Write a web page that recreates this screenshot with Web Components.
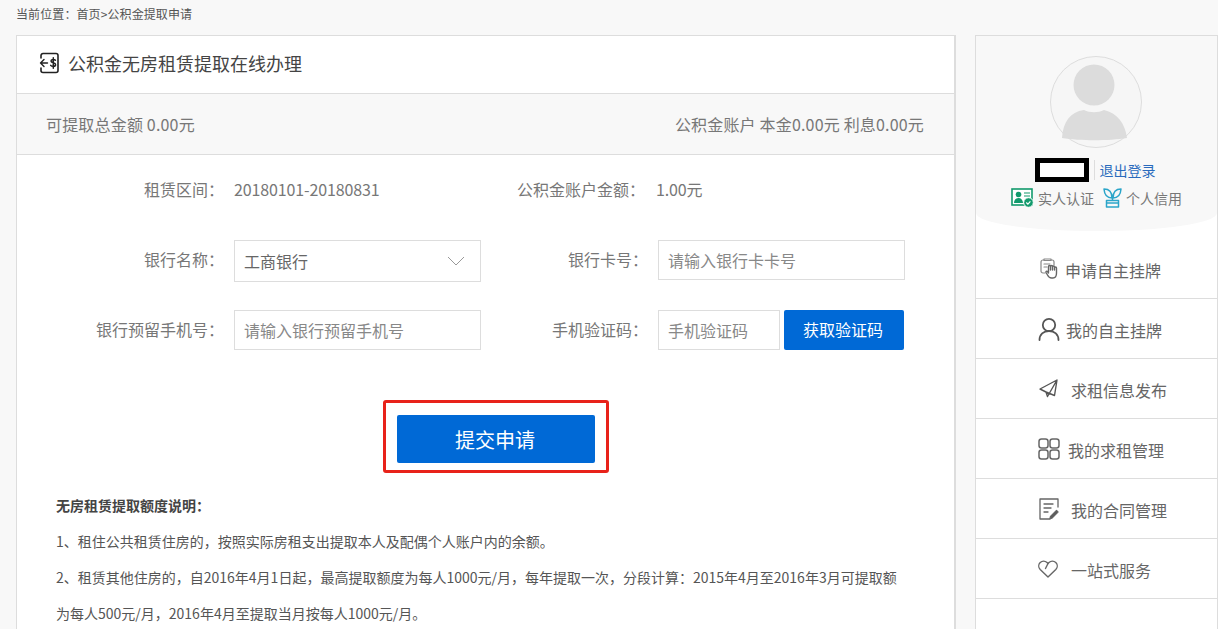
<!DOCTYPE html>
<html lang="zh">
<head>
<meta charset="utf-8">
<title>公积金无房租赁提取在线办理</title>
<style>
  html, body { margin: 0; height: 629px; overflow: hidden; background: #f8f8f8; }
  body { font-family: "Noto Sans CJK SC", "Noto Sans", sans-serif; color: #666; }
  .page { display: flex; align-items: flex-start; padding-left: 16px; }
</style>
</head>
<body>
<page-crumb>当前位置：首页&gt;公积金提取申请</page-crumb>
<div class="page">
  <apply-card>
    <svg slot="icon" width="20" height="22" viewBox="0 0 20 22" fill="none" stroke="#222" stroke-width="1.600" stroke-linecap="round" stroke-linejoin="round">
      <path d="M2 6V3.500A2 2 0 0 1 4 1.500h13a2 2 0 0 1 2 2v15a2 2 0 0 1-2 2H4a2 2 0 0 1-2-2V16"/>
      <path d="M8.500 11H1.500M5 7.500 1.500 11 5 14.500" stroke-width="1.400"/>
      <path d="M16.400 8.200c-.8-1-4.400-1.200-4.400.8 0 2.200 4.600 1.400 4.600 3.700 0 2.100-4 1.900-4.900.7M14.300 5.800v10.400" stroke-width="1.500"/>
    </svg>
    <span slot="title">公积金无房租赁提取在线办理</span>
    <span slot="left">可提取总金额 0.00元</span>
    <span slot="right">公积金账户 本金0.00元 利息0.00元</span>
    <apply-form slot="form"></apply-form>
    <apply-notes slot="notes">
      <b>无房租赁提取额度说明：</b>
      <p>1、租住公共租赁住房的，按照实际房租支出提取本人及配偶个人账户内的余额。</p>
      <p>2、租赁其他住房的，自2016年4月1日起，最高提取额度为每人1000元/月，每年提取一次，分段计算：2015年4月至2016年3月可提取额<br>为每人500元/月，2016年4月至提取当月按每人1000元/月。</p>
    </apply-notes>
  </apply-card>
  <side-panel>
    <side-item pad="64" gap="6">
      <svg slot="icon" width="19" height="21" viewBox="0 0 19 21" fill="none" stroke="#888" stroke-width="1.200" stroke-linecap="round" stroke-linejoin="round">
        <path d="M5 15H3a2 2 0 0 1-2-2V4a2 2 0 0 1 2-2h1M4 2.500h7V1H4zM11 2h1a2 2 0 0 1 2 2v3"/>
        <path d="M4 6h6M4 9h3"/>
        <path stroke="#666" stroke-width="1.400" fill="#fff" d="M8.500 14V8.500a1 1 0 0 1 2 0V12m0-3.500a1 1 0 0 1 2 0V12m0-3a1 1 0 0 1 2 0v3m0-2a1 1 0 0 1 2 0V15c0 3-1.500 5-3.500 5h-1.500c-2 0-3-1-4-3l-1.500-2.500c-.5-1 .8-1.800 1.500-1L8.500 15"/>
      </svg>
      申请自主挂牌
    </side-item>
    <side-item pad="62" gap="6">
      <svg slot="icon" width="22" height="24" viewBox="0 0 22 24" fill="none" stroke="#555" stroke-width="1.800" stroke-linecap="round">
        <circle cx="11" cy="8" r="6.200"/>
        <path d="M1.500 23c0-5.500 4-9 9.500-9s9.500 3.500 9.500 9"/>
      </svg>
      我的自主挂牌
    </side-item>
    <side-item pad="63" gap="13">
      <svg slot="icon" width="19" height="19" viewBox="0 0 19 19" fill="none" stroke="#555" stroke-width="1.400" stroke-linejoin="round" stroke-linecap="round">
        <path d="M18 1 1 10l6 3 1.500 4.500L18 1 15.500 16.500 7 13"/>
      </svg>
      求租信息发布
    </side-item>
    <side-item pad="62" gap="8">
      <svg slot="icon" width="22" height="22" viewBox="0 0 22 22" fill="none" stroke="#666" stroke-width="1.500">
        <rect x="1" y="1" width="9" height="9" rx="2.500"/>
        <rect x="12" y="1" width="9" height="9" rx="2.500"/>
        <rect x="1" y="12" width="9" height="9" rx="2.500"/>
        <rect x="12" y="12" width="9" height="9" rx="2.500"/>
      </svg>
      我的求租管理
    </side-item>
    <side-item pad="63" gap="12">
      <svg slot="icon" width="20" height="22" viewBox="0 0 20 22" fill="none" stroke="#666" stroke-width="1.300" stroke-linecap="round" stroke-linejoin="round">
        <path d="M19 9V1H1v20h10"/>
        <path d="M5 6h9M5 10h7M5 14h4"/>
        <path d="M13 20l6-6-1.500-1.500-6 6-.5 2z" fill="#555"/>
      </svg>
      我的合同管理
    </side-item>
    <side-item pad="62" gap="13">
      <svg slot="icon" width="20" height="18" viewBox="0 0 20 18" fill="none" stroke="#666" stroke-width="1.400" stroke-linejoin="round" stroke-linecap="round">
        <path d="M10 17 2.200 9.500a5 5 0 0 1 0-7 5 5 0 0 1 6.800 0L10 3.500l1-1a5 5 0 0 1 6.800 0 5 5 0 0 1 0 7z"/>
        <path d="M10 3.500 7.500 8.500"/>
      </svg>
      一站式服务
    </side-item>
    <side-item></side-item>
  </side-panel>
</div>

<script>
  const FONT = '"Noto Sans CJK SC", "Noto Sans", sans-serif';

  class PageCrumb extends HTMLElement {
    constructor() {
      super();
      this.attachShadow({ mode: "open" }).innerHTML = `
        <style>
          :host { display: block; height: 35px; padding: 5px 0 0 16px; box-sizing: border-box;
            font: 12px/18px ${FONT}; letter-spacing: .1px; color: #555; }
        </style>
        <slot></slot>`;
    }
  }

  class ApplyCard extends HTMLElement {
    constructor() {
      super();
      this.attachShadow({ mode: "open" }).innerHTML = `
        <style>
          :host { display: block; width: 940px; height: 594px; box-sizing: border-box; background: #fff; overflow: hidden;
            border: 1px solid #ddd; border-right: 2px solid #ddd; border-bottom: 0; flex: none; }
          .head { display: flex; align-items: center; gap: 9px; height: 58px; padding: 0 0 3px 22px; box-sizing: border-box;
            font-size: 18px; color: #444; border-bottom: 1px solid #ddd; }
          .bar { display: flex; justify-content: space-between; align-items: center; height: 61px; padding: 0 30px 0 29px;
            background: #f8f8f8; border-bottom: 1px solid #ddd; font-size: 16px; letter-spacing: .18px; color: #777; box-sizing: border-box; }
          ::slotted(svg) { display: block; }
        </style>
        <div class="head"><slot name="icon"></slot><slot name="title"></slot></div>
        <div class="bar"><slot name="left"></slot><slot name="right"></slot></div>
        <slot name="form"></slot>
        <slot name="notes"></slot>`;
    }
  }

  class FormLabel extends HTMLElement {
    constructor() {
      super();
      this.attachShadow({ mode: "open" }).innerHTML = `
        <style>
          :host { display: flex; align-items: center; justify-content: flex-end; padding: 0 10px 2px 0;
            font-size: 16px; color: #777; white-space: nowrap; }
        </style>
        <slot></slot>：`;
    }
  }

  class FormInput extends HTMLElement {
    constructor() {
      super();
      this.attachShadow({ mode: "open" }).innerHTML = `
        <style>
          :host { display: flex; align-items: center; justify-content: space-between; box-sizing: border-box; height: 40px;
            padding: 0 10px 0 9px; background: #fff; border: 1px solid #ddd; font-size: 16px; color: #888; }
          :host([select]) { height: 42px; color: #666; padding: 0 15px 1px 9px; }
          svg { display: none; }
          :host([select]) svg { display: block; }
        </style>
        <slot></slot>
        <svg width="18" height="10" viewBox="0 0 18 10" fill="none" stroke="#999" stroke-width="1"><path d="M1 1l8 8 8-8"/></svg>`;
    }
  }

  class ApplyForm extends HTMLElement {
    constructor() {
      super();
      this.attachShadow({ mode: "open" }).innerHTML = `
        <style>
          :host { display: block; padding-top: 15px; }
          .grid { display: grid; grid-template-columns: 217px 247px 177px 247px; grid-auto-rows: 40px; row-gap: 30px; }
          .value { display: flex; align-items: center; padding-bottom: 2px; font-size: 16px; letter-spacing: -.12px; color: #777; }
          .value.amount { margin-left: -2px; }
          .narrow { padding-right: 13px; }
          .code { display: flex; gap: 4px; }
          .code form-input { width: 122px; flex: none; }
          .send { width: 120px; height: 40px; border: 0; border-radius: 2px; background: #0069d6; color: #fff;
            font: 16px ${FONT}; padding: 0 2px 2px 0; }
          .frame { width: 198px; height: 48px; margin: 50px 0 0 366px; padding: 12px 11px 7px;
            border: 3px solid #e8221a; border-radius: 3px; }
          .submit { display: block; width: 198px; height: 48px; border: 0; border-radius: 2px; background: #0069d6; color: #fff;
            font: 20px ${FONT}; padding: 0 2px 0 0; }
        </style>
        <div class="grid">
          <form-label>租赁区间</form-label><div class="value">20180101-20180831</div>
          <form-label class="narrow">公积金账户金额</form-label><div class="value amount">1.00元</div>
          <form-label>银行名称</form-label><form-input select>工商银行</form-input>
          <form-label>银行卡号</form-label><form-input>请输入银行卡卡号</form-input>
          <form-label>银行预留手机号</form-label><form-input>请输入银行预留手机号</form-input>
          <form-label>手机验证码</form-label>
          <div class="code"><form-input>手机验证码</form-input><button class="send" type="button">获取验证码</button></div>
        </div>
        <div class="frame"><button class="submit" type="button">提交申请</button></div>`;
    }
  }

  class ApplyNotes extends HTMLElement {
    constructor() {
      super();
      this.attachShadow({ mode: "open" }).innerHTML = `
        <style>
          :host { display: block; margin-top: 14px; padding-left: 39px; font-size: 14px; line-height: 36px; color: #555; white-space: nowrap; }
          ::slotted(p) { margin: 0; }
          ::slotted(b) { display: block; font-weight: 700; color: #444; }
        </style>
        <slot></slot>`;
    }
  }

  class SidePanel extends HTMLElement {
    constructor() {
      super();
      this.attachShadow({ mode: "open" }).innerHTML = `
        <style>
          :host { display: block; width: 243px; height: 594px; margin-left: 19px; box-sizing: border-box; flex: none;
            background: #fff; border: 1px solid #ddd; border-bottom: 0; overflow: hidden; }
          .top { height: 195px; background: #f8f8f8; border-radius: 0 0 50% 50% / 0 0 18px 18px; margin-bottom: 8px;
            display: flex; flex-direction: column; align-items: center; padding-top: 20px; box-sizing: border-box; }
          .avatar { display: block; flex: none; margin-left: -1px; }
          .who { display: flex; align-items: center; height: 24px; margin: 10px 0 0 -3px; }
          .name { width: 44px; height: 14px; border: 5px solid #000; background: #fff; }
          .logout { margin-left: 5px; padding-left: 5px; border-left: 1px solid #ddd; font-size: 14px; line-height: 20px; color: #2a6bbd; }
          .tags { display: flex; align-items: center; margin-top: 5px; font-size: 14px; color: #777; line-height: 22px; }
          .tags svg { display: block; margin-right: 4px; }
          .tags span + svg { margin-left: 9px; }
        </style>
        <div class="top">
          <svg class="avatar" width="92" height="92" viewBox="0 0 92 92">
            <circle cx="46" cy="46" r="45.500" fill="#f6f6f6" stroke="#ddd"/>
            <circle cx="44" cy="29" r="20.500" fill="#dcdcdc"/>
            <path d="M12 82c1-16 8-26 22-28 6 3 14 3 20 0 13 3 21 13 23 28-18 3-47 3-65 0z" fill="#dcdcdc"/>
          </svg>
          <div class="who"><div class="name"></div><div class="logout">退出登录</div></div>
          <div class="tags">
            <svg width="23" height="20" viewBox="0 0 23 20">
              <rect x="1" y="1" width="20" height="16" fill="#fff" stroke="#129a6c" stroke-width="1.600"/>
              <circle cx="7.500" cy="6.500" r="2.800" fill="#129a6c"/>
              <path d="M3 15c0-3 2-5 4.500-5s4.500 2 4.500 5z" fill="#129a6c"/>
              <path d="M13 5h6M13 8h6" stroke="#129a6c" stroke-width="1.200"/>
              <circle cx="17.500" cy="14.500" r="4.800" fill="#129a6c" stroke="#fff"/>
              <path d="M15.300 14.500l1.600 1.600 2.500-2.800" fill="none" stroke="#fff" stroke-width="1.200"/>
            </svg>
            <span>实人认证</span>
            <svg width="19" height="20" viewBox="0 0 19 20" fill="none" stroke="#2ba5c9" stroke-width="1.500" stroke-linejoin="round">
              <path d="M9 10C5 10 1.500 8 1 1c4 0 8 2 8 9zM10 10c4 0 7.500-2 8-9-4 0-8 2-8 9zM9.500 10v3"/>
              <path d="M3.500 12.500h12V19h-12zM4 15h11"/>
            </svg>
            <span>个人信用</span>
          </div>
        </div>
        <slot></slot>`;
    }
  }

  class SideItem extends HTMLElement {
    constructor() {
      super();
      this.attachShadow({ mode: "open" }).innerHTML = `
        <style>
          :host { display: flex; align-items: center; box-sizing: border-box; height: 60px; padding-top: 2px;
            border-bottom: 1px solid #ddd; font-size: 16px; color: #666; }
          ::slotted(svg) { display: block; flex: none; margin-top: -2px; }
        </style>
        <slot name="icon"></slot><slot></slot>`;
    }
    connectedCallback() {
      this.style.paddingLeft = (this.getAttribute("pad") || 0) + "px";
      this.style.columnGap = (this.getAttribute("gap") || 0) + "px";
    }
  }

  customElements.define("page-crumb", PageCrumb);
  customElements.define("apply-card", ApplyCard);
  customElements.define("form-label", FormLabel);
  customElements.define("form-input", FormInput);
  customElements.define("apply-form", ApplyForm);
  customElements.define("apply-notes", ApplyNotes);
  customElements.define("side-panel", SidePanel);
  customElements.define("side-item", SideItem);
</script>
</body>
</html>
